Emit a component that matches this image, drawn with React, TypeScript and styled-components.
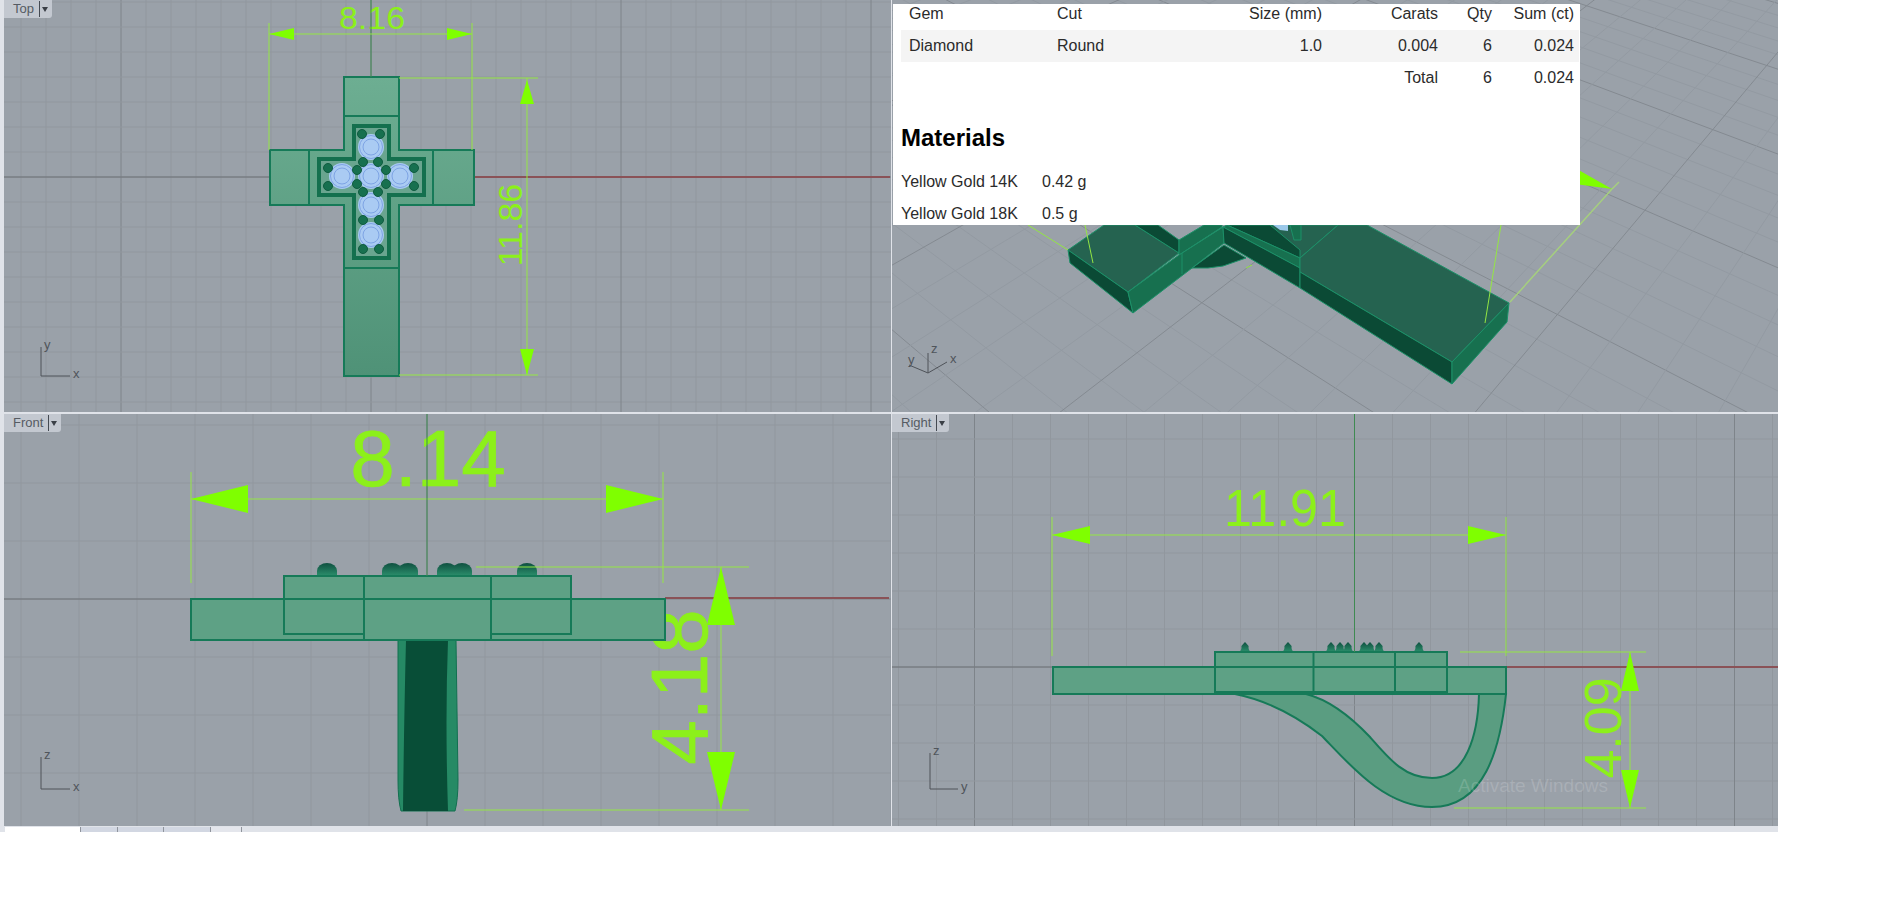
import React from "react";
import styled, { createGlobalStyle } from "styled-components";

type Pt = [number, number];

const GlobalStyle = createGlobalStyle`
  html, body {
    margin: 0;
    background: #ffffff;
    font-family: "Liberation Sans", Arial, sans-serif;
  }
`;

const points = (list: Pt[]) => list.map((p) => p.join(",")).join(" ");

type FrameProps = { x: number; y: number; w: number; h: number; children: React.ReactNode };

const Frame = ({ x, y, w, h, children }: FrameProps) => (
  <Drawing width={w} height={h} viewBox={`${x} ${y} ${w} ${h}`}>
    {children}
  </Drawing>
);

type GridProps = { x: number; y: number; w: number; h: number; cx: number; cy: number; step: number };

const SquareGrid = ({ x, y, w, h, cx, cy, step }: GridProps) => {
  const lines: React.ReactNode[] = [];
  for (let k = -40; k <= 40; k++) {
    const vx = cx + k * step;
    const hy = cy + k * step;
    if (vx >= x && vx <= x + w) {
      lines.push(<GridLine key={`v${k}`} $major={k % 10 === 0} x1={vx} y1={y} x2={vx} y2={y + h} />);
    }
    if (hy >= y && hy <= y + h) {
      lines.push(<GridLine key={`h${k}`} $major={k % 10 === 0} x1={x} y1={hy} x2={x + w} y2={hy} />);
    }
  }
  return <g>{lines}</g>;
};

// both families of the ground grid run to a vanishing point, evenly spaced along a line parallel to the horizon
const PerspectiveGrid = () => {
  const vanishing: Pt[] = [
    [-180, -580],
    [2242, -500],
  ];
  const lines: React.ReactNode[] = [];
  vanishing.forEach((vp, family) => {
    for (let k = -40; k <= 40; k++) {
      const px = 1335 + k * 62;
      const py = 200 + k * 62 * 0.033;
      lines.push(
        <GroundLine
          key={`${family}-${k}`}
          $major={k % 5 === 0}
          x1={vp[0]}
          y1={vp[1]}
          x2={vp[0] + (px - vp[0]) * 3}
          y2={vp[1] + (py - vp[1]) * 3}
        />
      );
    }
  });
  return <g>{lines}</g>;
};

type ArrowProps = { tip: Pt; dir: "left" | "right" | "up" | "down"; length: number; half: number };

const Arrow = ({ tip, dir, length, half }: ArrowProps) => {
  const [x, y] = tip;
  const shape: Record<ArrowProps["dir"], Pt[]> = {
    left: [[x, y], [x + length, y - half], [x + length, y + half]],
    right: [[x, y], [x - length, y - half], [x - length, y + half]],
    up: [[x, y], [x - half, y + length], [x + half, y + length]],
    down: [[x, y], [x - half, y - length], [x + half, y - length]],
  };
  return <ArrowHead points={points(shape[dir])} />;
};

type AxisProps = { x: number; y: number; up: number; side: number; upLabel: string; sideLabel: string };

const AxisMark = ({ x, y, up, side, upLabel, sideLabel }: AxisProps) => (
  <g>
    <AxisLine x1={x} y1={y - up} x2={x} y2={y} />
    <AxisLine x1={x} y1={y} x2={x + side} y2={y} />
    <AxisText x={x + 3} y={y - up + 2}>{upLabel}</AxisText>
    <AxisText x={x + side + 3} y={y + 2}>{sideLabel}</AxisText>
  </g>
);

type ProngProps = { cx: number; base: number; top: number; half: number; pointed?: boolean };

const Prong = ({ cx, base, top, half, pointed }: ProngProps) => (
  <ProngShape
    d={
      pointed
        ? `M${cx - half} ${base}Q${cx - half * 0.5} ${base - 2} ${cx - half * 0.6} ${top + 4}Q${cx - 1} ${top + 1} ${cx} ${top}Q${cx + 1} ${top + 1} ${cx + half * 0.6} ${top + 4}Q${cx + half * 0.5} ${base - 2} ${cx + half} ${base}Z`
        : `M${cx - half} ${base}V${top + half * 0.8}A${half} ${half * 0.8} 0 0 1 ${cx + half} ${top + half * 0.8}V${base}Z`
    }
  />
);

const gemCenters: Pt[] = [
  [371, 147],
  [342, 176],
  [371, 176],
  [400, 176],
  [371, 205],
  [371, 235],
];

const prongCenters: Pt[] = [
  [362, 134], [380, 134], [363, 162], [378, 162],
  [328, 168], [328, 186], [357, 170], [357, 184],
  [386, 170], [386, 184], [414, 168], [414, 186],
  [363, 192], [378, 192], [363, 220], [379, 220],
  [363, 249], [379, 249],
];

const TopScene = () => (
  <Frame x={4} y={0} w={887} h={412}>
    <defs>
      <linearGradient id="topBody" x1="0" y1="0" x2="0" y2="1">
        <stop offset="0" stopColor="#6dae92" />
        <stop offset="1" stopColor="#4f9277" />
      </linearGradient>
      <linearGradient id="prongFill" x1="0" y1="0" x2="0" y2="1">
        <stop offset="0" stopColor="#0f5040" />
        <stop offset="1" stopColor="#2c8f6c" />
      </linearGradient>
    </defs>
    <SquareGrid x={4} y={0} w={887} h={412} cx={371} cy={177} step={25} />
    <WorldAxis x1={4} y1={177} x2={270} y2={177} />
    <RedAxis x1={474} y1={177} x2={890} y2={177} />

    <Body
      $fill="url(#topBody)"
      points={points([
        [344, 77], [399, 77], [399, 150], [474, 150], [474, 205], [399, 205],
        [399, 376], [344, 376], [344, 205], [270, 205], [270, 150], [344, 150],
      ])}
    />
    <Seam x1={344} y1={116} x2={399} y2={116} />
    <Seam x1={344} y1={268} x2={399} y2={268} />
    <Seam x1={309} y1={150} x2={309} y2={205} />
    <Seam x1={433} y1={150} x2={433} y2={205} />
    <Pocket
      points={points([
        [354, 126], [389, 126], [389, 159], [424, 159], [424, 195], [389, 195],
        [389, 258], [354, 258], [354, 195], [319, 195], [319, 159], [354, 159],
      ])}
    />
    {gemCenters.map(([cx, cy]) => (
      <g key={`${cx}-${cy}`}>
        <GemHalo cx={cx} cy={cy} r={13} />
        <GemRing cx={cx} cy={cy} r={11.5} />
        <GemRing cx={cx} cy={cy} r={8} />
      </g>
    ))}
    {prongCenters.map(([cx, cy]) => (
      <ProngDot key={`${cx}-${cy}`} cx={cx} cy={cy} r={4.5} />
    ))}

    <DimText $size={32} x={372} y={29} textAnchor="middle" textLength={66} lengthAdjust="spacingAndGlyphs">
      8.16
    </DimText>
    <GreenAxis x1={371} y1={0} x2={371} y2={77} />
    <Lime x1={269} y1={23} x2={269} y2={150} />
    <Lime x1={472} y1={23} x2={472} y2={150} />
    <Lime x1={269} y1={34} x2={472} y2={34} />
    <Arrow tip={[269, 34]} dir="left" length={25} half={6} />
    <Arrow tip={[472, 34]} dir="right" length={25} half={6} />

    <Lime x1={399} y1={78} x2={538} y2={78} />
    <Lime x1={399} y1={375} x2={538} y2={375} />
    <Lime x1={527} y1={78} x2={527} y2={375} />
    <Arrow tip={[527, 80]} dir="up" length={24} half={7} />
    <Arrow tip={[527, 375]} dir="down" length={26} half={7} />
    <DimText $size={34} transform="translate(522 225) rotate(-90)" textAnchor="middle">11.86</DimText>

    <AxisMark x={41} y={376} up={29} side={29} upLabel="y" sideLabel="x" />
  </Frame>
);

const PerspectiveScene = () => (
  <Frame x={892} y={0} w={886} h={412}>
    <PerspectiveGrid />
    <Lime x1={1028} y1={225} x2={1068} y2={250} />
    <FadedLime x1={1612} y1={189} x2={1510} y2={302} />
    <FadedLime x1={1612} y1={189} x2={1619} y2={182} />
    <ArrowHead points={points([[1575, 168], [1612, 189], [1575, 184]])} />

    <Solid $tone="dark" points={points([[1192, 268], [1224, 245], [1246, 258], [1223, 266], [1208, 268]])} />
    <Solid $tone="top" points={points([[1068, 250], [1104, 225], [1135, 225], [1179, 253], [1128, 292]])} />
    <Solid $tone="dark" points={points([[1135, 225], [1158, 225], [1179, 240], [1179, 253]])} />
    <Solid $tone="side" points={points([[1179, 240], [1204, 225], [1222, 225], [1222, 227], [1179, 255]])} />
    <Solid $tone="dark" points={points([[1068, 250], [1128, 292], [1133, 313], [1070, 263]])} />
    <Solid $tone="side" points={points([[1128, 292], [1179, 255], [1223, 227], [1224, 243], [1192, 268], [1133, 313]])} />
    <Seam3d x1={1182} y1={253} x2={1182} y2={274} />
    <Solid $tone="top" points={points([[1227, 225], [1338, 225], [1300, 258]])} />
    <Solid $tone="dark" points={points([[1227, 225], [1270, 225], [1300, 250], [1300, 258]])} />
    <Solid $tone="side" points={points([[1227, 225], [1300, 258], [1300, 268], [1223, 227]])} />
    <Solid $tone="dark" points={points([[1223, 227], [1300, 268], [1300, 288], [1224, 243]])} />
    <Solid $tone="top" points={points([[1300, 258], [1338, 225], [1367, 225], [1509, 303], [1452, 362], [1300, 272]])} />
    <Solid $tone="dark" points={points([[1300, 272], [1452, 362], [1452, 384], [1300, 288]])} />
    <Solid $tone="side" points={points([[1452, 362], [1509, 303], [1507, 322], [1452, 384]])} />
    <GemChip points={points([[1273, 225], [1288, 225], [1288, 231], [1280, 230]])} />
    <Solid $tone="side" points={points([[1290, 225], [1301, 225], [1301, 240], [1294, 240]])} />

    <Lime x1={1085} y1={225} x2={1093} y2={263} />
    <Lime x1={1501} y1={225} x2={1485} y2={323} />
    <Lime x1={1246} y1={268} x2={1252} y2={265} />

    <AxisLine x1={928} y1={373} x2={928} y2={353} />
    <AxisLine x1={928} y1={373} x2={947} y2={362} />
    <AxisLine x1={928} y1={373} x2={909} y2={365} />
    <AxisText x={931} y={353}>z</AxisText>
    <AxisText x={950} y={363}>x</AxisText>
    <AxisText x={908} y={364}>y</AxisText>
  </Frame>
);

const FrontScene = () => (
  <Frame x={4} y={414} w={887} h={412}>
    <SquareGrid x={4} y={414} w={887} h={412} cx={427} cy={599} step={58} />
    <WorldAxis x1={4} y1={599} x2={191} y2={599} />
    <RedAxis x1={665} y1={598} x2={889} y2={598} />
    <DimText $size={80} $heavy transform="translate(707 687) rotate(-90)" textAnchor="middle">4.18</DimText>

    {[327, 392, 408, 447, 462, 527].map((cx) => (
      <Prong key={cx} cx={cx} base={576} top={563} half={10} />
    ))}

    <BandSide d="M398 640H456L458 780Q458 800 455 811H401Q398 800 398 780Z" />
    <BandHollow d="M406 640H448Q445 720 448 811H403Q404 720 406 640Z" />

    <Body $fill="#5ea185" points={points([[191, 599], [665, 599], [665, 640], [191, 640]])} />
    <Body $fill="#5ea185" points={points([[284, 576], [571, 576], [571, 634], [284, 634]])} />
    <Seam x1={284} y1={599} x2={571} y2={599} />
    <Seam x1={364} y1={576} x2={364} y2={640} />
    <Seam x1={491} y1={576} x2={491} y2={640} />
    <CenterPatch x={365} y={600} width={125} height={39} />

    <Lime x1={191} y1={472} x2={191} y2={583} />
    <Lime x1={663} y1={472} x2={663} y2={583} />
    <Lime x1={191} y1={499} x2={663} y2={499} />
    <Arrow tip={[191, 499]} dir="left" length={57} half={14} />
    <Arrow tip={[663, 499]} dir="right" length={57} half={14} />
    <DimText $size={80} $heavy x={428} y={486} textAnchor="middle">8.14</DimText>
    <GreenAxis x1={427} y1={414} x2={427} y2={576} />

    <Lime x1={476} y1={567} x2={749} y2={567} />
    <Lime x1={464} y1={810} x2={749} y2={810} />
    <Lime x1={721} y1={567} x2={721} y2={810} />
    <Arrow tip={[721, 567]} dir="up" length={58} half={14} />
    <Arrow tip={[721, 810]} dir="down" length={58} half={14} />

    <AxisMark x={41} y={789} up={32} side={29} upLabel="z" sideLabel="x" />
  </Frame>
);

const RightScene = () => (
  <Frame x={892} y={414} w={886} h={412}>
    <SquareGrid x={892} y={414} w={886} h={412} cx={1354.5} cy={667} step={38} />
    <WorldAxis x1={892} y1={667} x2={1053} y2={667} />
    <RedAxis x1={1506} y1={667} x2={1778} y2={667} />

    {[1245, 1288, 1331, 1340, 1348, 1364, 1370, 1379, 1419].map((cx) => (
      <Prong key={cx} cx={cx} base={652} top={642} half={6} pointed />
    ))}

    <RingSweep d="M1235 694C1265 700 1295 715 1322 736C1350 765 1385 807 1432 807C1484 807 1500 750 1506 694H1479C1478 735 1466 778 1432 778C1405 778 1390 760 1370 737C1352 718 1330 700 1306 694Z" />
    <Body $fill="#5ea185" points={points([[1053, 667], [1506, 667], [1506, 694], [1053, 694]])} />
    <Body $fill="#5ea185" points={points([[1215, 652], [1447, 652], [1447, 692], [1215, 692]])} />
    <Seam x1={1215} y1={667} x2={1447} y2={667} />
    <Seam x1={1313.5} y1={652} x2={1313.5} y2={694} />
    <Seam x1={1395} y1={652} x2={1395} y2={694} />

    <Watermark x={1458} y={792}>Activate Windows</Watermark>

    <Lime x1={1052} y1={517} x2={1052} y2={656} />
    <Lime x1={1506} y1={517} x2={1506} y2={656} />
    <Lime x1={1052} y1={535} x2={1506} y2={535} />
    <Arrow tip={[1052, 535]} dir="left" length={38} half={9} />
    <Arrow tip={[1506, 535]} dir="right" length={38} half={9} />
    <DimText $size={52} x={1285} y={526} textAnchor="middle" textLength={122} lengthAdjust="spacingAndGlyphs">
      11.91
    </DimText>
    <GreenAxis x1={1354.5} y1={414} x2={1354.5} y2={652} />

    <Lime x1={1460} y1={652} x2={1646} y2={652} />
    <Lime x1={1454} y1={808} x2={1646} y2={808} />
    <Lime x1={1630} y1={652} x2={1630} y2={808} />
    <Arrow tip={[1630, 652]} dir="up" length={39} half={9} />
    <Arrow tip={[1630, 808]} dir="down" length={38} half={9} />
    <DimText $size={52} transform="translate(1621 728) rotate(-90)" textAnchor="middle">4.09</DimText>

    <AxisMark x={930} y={789} up={36} side={28} upLabel="z" sideLabel="y" />
  </Frame>
);

const ViewName = ({ name }: { name: string }) => (
  <ViewTab>
    <ViewTitle>{name}</ViewTitle>
    <ViewCaret />
  </ViewTab>
);

const gemRows = [
  { gem: "Diamond", cut: "Round", size: "1.0", carats: "0.004", qty: "6", sum: "0.024" },
];

const ReportPanel = () => (
  <Panel>
    <GemTable>
      <colgroup>
        <col width={148} />
        <col width={148} />
        <col width={130} />
        <col width={116} />
        <col width={54} />
        <col width={82} />
      </colgroup>
      <thead>
        <tr>
          <HeadCell>Gem</HeadCell>
          <HeadCell>Cut</HeadCell>
          <HeadCell $right>Size (mm)</HeadCell>
          <HeadCell $right>Carats</HeadCell>
          <HeadCell $right>Qty</HeadCell>
          <HeadCell $right>Sum (ct)</HeadCell>
        </tr>
      </thead>
      <tbody>
        {gemRows.map((row) => (
          <StripedRow key={row.gem}>
            <Cell>{row.gem}</Cell>
            <Cell>{row.cut}</Cell>
            <Cell $right>{row.size}</Cell>
            <Cell $right>{row.carats}</Cell>
            <Cell $right>{row.qty}</Cell>
            <Cell $right>{row.sum}</Cell>
          </StripedRow>
        ))}
        <tr>
          <Cell colSpan={3} />
          <Cell $right>Total</Cell>
          <Cell $right>6</Cell>
          <Cell $right>0.024</Cell>
        </tr>
      </tbody>
    </GemTable>
    <PanelHeading>Materials</PanelHeading>
    <MaterialList>
      <MaterialRow>
        <span>Yellow Gold 14K</span>
        <span>0.42 g</span>
      </MaterialRow>
      <MaterialRow>
        <span>Yellow Gold 18K</span>
        <span>0.5 g</span>
      </MaterialRow>
    </MaterialList>
  </Panel>
);

const bottomTabs = [
  { width: 76, tone: "#ffffff" },
  { width: 37, tone: "#d2d7e2" },
  { width: 46, tone: "#d2d7e2" },
  { width: 47, tone: "#d2d7e2" },
  { width: 31, tone: "#e4e6ec" },
];

export default function App() {
  return (
    <>
      <GlobalStyle />
      <Workspace>
        <Viewports>
          <Viewport>
            <TopScene />
            <ViewName name="Top" />
          </Viewport>
          <Viewport>
            <PerspectiveScene />
            <ReportPanel />
          </Viewport>
          <Viewport>
            <FrontScene />
            <ViewName name="Front" />
          </Viewport>
          <Viewport>
            <RightScene />
            <ViewName name="Right" />
          </Viewport>
        </Viewports>
        <TabStrip>
          {bottomTabs.map((tab, i) => (
            <SheetTab key={i} $width={tab.width} $tone={tab.tone} />
          ))}
        </TabStrip>
      </Workspace>
    </>
  );
}

const Workspace = styled.div`
  width: 1778px;
  background: #e0e3e9;
`;

const Viewports = styled.div`
  display: grid;
  grid-template-columns: 887px 886px;
  grid-template-rows: 412px 412px;
  column-gap: 1px;
  row-gap: 2px;
  padding-left: 4px;
`;

const Viewport = styled.div`
  position: relative;
  overflow: hidden;
  background: #9aa1a9;
`;

const Drawing = styled.svg`
  display: block;
`;

const ViewTab = styled.div`
  position: absolute;
  top: 0;
  left: 0;
  display: flex;
  align-items: center;
  height: 18px;
  padding: 0 4px 0 9px;
  background: #c3c8d0;
  border-radius: 0 0 3px 0;
`;

const ViewTitle = styled.span`
  padding-right: 5px;
  border-right: 1px solid #444a52;
  color: #555b63;
  font-size: 13px;
  line-height: 16px;
`;

const ViewCaret = styled.span`
  width: 0;
  height: 0;
  margin-left: 2px;
  border-left: 3px solid transparent;
  border-right: 3px solid transparent;
  border-top: 5px solid #3a3f46;
`;

const Panel = styled.div`
  position: absolute;
  top: 4px;
  left: 1px;
  box-sizing: border-box;
  width: 687px;
  height: 221px;
  padding-left: 8px;
  overflow: hidden;
  background: #ffffff;
  color: #2b2b2b;
  font-size: 16px;
`;

const GemTable = styled.table`
  width: 678px;
  border-collapse: collapse;
  table-layout: fixed;
`;

const HeadCell = styled.th<{ $right?: boolean }>`
  height: 26px;
  padding: 0 5px 7px 8px;
  box-sizing: border-box;
  font-weight: 400;
  line-height: 19px;
  text-align: ${(props) => (props.$right ? "right" : "left")};
  white-space: nowrap;
`;

const StripedRow = styled.tr`
  background: #f4f4f4;
`;

const Cell = styled.td<{ $right?: boolean }>`
  height: 32px;
  padding: 0 5px 0 8px;
  box-sizing: border-box;
  text-align: ${(props) => (props.$right ? "right" : "left")};
`;

const PanelHeading = styled.h3`
  margin: 30px 0 14px;
  color: #000000;
  font-size: 24px;
  font-weight: 700;
  line-height: 28px;
`;

const MaterialList = styled.div`
  display: flex;
  flex-direction: column;
`;

const MaterialRow = styled.div`
  display: grid;
  grid-template-columns: 141px 1fr;
  align-items: center;
  height: 32px;
  padding-bottom: 1px;
  box-sizing: border-box;
`;

const TabStrip = styled.div`
  display: flex;
  height: 6px;
  padding: 1px 0 0 5px;
  box-sizing: border-box;
`;

const SheetTab = styled.div<{ $width: number; $tone: string }>`
  width: ${(props) => props.$width}px;
  background: ${(props) => props.$tone};
  border-right: 1px solid #8f949c;
  box-sizing: border-box;
`;

const GridLine = styled.line<{ $major: boolean }>`
  stroke: ${(props) => (props.$major ? "#7e848a" : "#91979e")};
  stroke-width: 1;
`;

const GroundLine = styled.line<{ $major: boolean }>`
  stroke: ${(props) => (props.$major ? "#848a91" : "#939aa2")};
  stroke-width: 1;
`;

const WorldAxis = styled.line`
  stroke: #74797f;
  stroke-width: 1;
`;

const RedAxis = styled.line`
  stroke: #8a5257;
  stroke-width: 2;
`;

const GreenAxis = styled.line`
  stroke: #3f8a52;
  stroke-width: 1;
`;

const Lime = styled.line`
  stroke: #94e644;
  stroke-width: 1;
`;

const FadedLime = styled.line`
  stroke: #a5cf7e;
  stroke-width: 1.5;
`;

const ArrowHead = styled.polygon`
  fill: #7fff00;
`;

const DimText = styled.text<{ $size: number; $heavy?: boolean }>`
  fill: #8cf01a;
  font-family: "Liberation Sans", Arial, sans-serif;
  font-size: ${(props) => props.$size}px;
  stroke: ${(props) => (props.$heavy ? "#8cf01a" : "none")};
  stroke-width: 0.7;
`;

const AxisLine = styled.line`
  stroke: #4f5359;
  stroke-width: 1;
`;

const AxisText = styled.text`
  fill: #50555b;
  font-family: "Liberation Sans", Arial, sans-serif;
  font-size: 13px;
`;

const Body = styled.polygon<{ $fill: string }>`
  fill: ${(props) => props.$fill};
  stroke: #167a58;
  stroke-width: 2;
`;

const RingSweep = styled.path`
  fill: #5a9d81;
  stroke: #167a58;
  stroke-width: 2;
`;

const CenterPatch = styled.rect`
  fill: #5ea185;
`;

const Seam = styled.line`
  stroke: #167a58;
  stroke-width: 2;
`;

const Seam3d = styled.line`
  stroke: #1c9068;
  stroke-width: 1;
`;

const Pocket = styled.polygon`
  fill: #6aa58f;
  stroke: #14704e;
  stroke-width: 4;
`;

const GemHalo = styled.circle`
  fill: #aacbf3;
`;

const GemRing = styled.circle`
  fill: none;
  stroke: #7ea4e4;
  stroke-width: 1;
`;

const ProngDot = styled.circle`
  fill: #17704f;
  stroke: #0f5c40;
  stroke-width: 1;
`;

const ProngShape = styled.path`
  fill: url(#prongFill);
`;

const BandSide = styled.path`
  fill: #268a65;
  stroke: #127050;
  stroke-width: 1;
`;

const BandHollow = styled.path`
  fill: #084e37;
`;

const Watermark = styled.text`
  fill: rgba(255, 255, 255, 0.16);
  font-family: "Liberation Sans", Arial, sans-serif;
  font-size: 19px;
`;

const toneFill = { top: "#256350", side: "#17704f", dark: "#0b4a35" };

const Solid = styled.polygon<{ $tone: keyof typeof toneFill }>`
  fill: ${(props) => toneFill[props.$tone]};
  stroke: #1c9068;
  stroke-width: 1;
`;

const GemChip = styled.polygon`
  fill: #9cc9ea;
`;
